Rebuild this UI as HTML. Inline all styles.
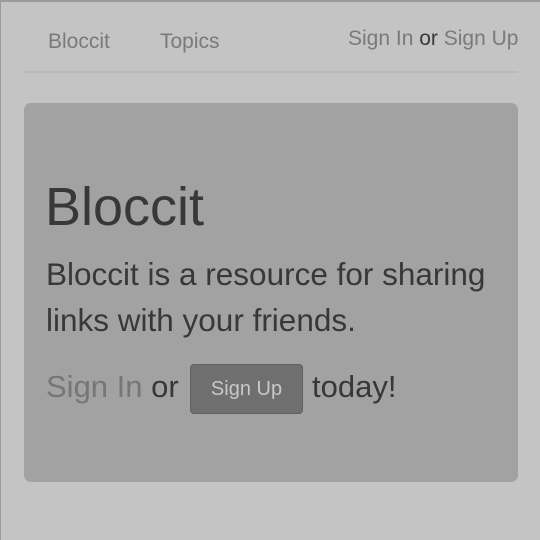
<!DOCTYPE html>
<html><head><style>
html,body{margin:0;padding:0}
body{width:540px;height:540px;background:#c4c4c4;font-family:"Liberation Sans",Arial,sans-serif;position:relative;overflow:hidden;border-top:2px solid #9a9a9a;box-sizing:border-box;border-left:1px solid #9a9a9a}
.t{position:absolute;white-space:nowrap}
.nav{color:#7a7a7a;font-size:21px}
.hr{position:absolute;left:23px;top:69px;width:494px;height:2px;background:#bababa}
.jb{position:absolute;left:23px;top:101px;width:494px;height:379px;background:#a2a2a2;border-radius:7px}
.btn{position:absolute;left:189px;top:362px;width:111px;height:48px;background:#6f6f6f;border:1px solid #626262;border-radius:4px;color:#c8c8c8;font-size:20px;text-align:center;line-height:48px}
</style></head><body>
<div class="t nav" style="left:47px;top:28px">Bloccit</div>
<div class="t nav" style="left:159px;top:28px">Topics</div>
<div class="t nav" style="left:347px;top:25px">Sign In <span style="color:#3a3a3a">or</span> Sign Up</div>
<div class="hr"></div>
<div class="jb"></div>
<div class="t" style="left:44px;top:174px;font-size:54px;color:#383838">Bloccit</div>
<div class="t" style="left:45px;top:249px;font-size:31.5px;color:#383838;line-height:46px">Bloccit is a resource for sharing<br>links with your friends.</div>
<div class="t" style="left:45px;top:367px;font-size:31px;color:#383838"><span style="color:#767676">Sign In</span> or</div>
<div class="btn">Sign Up</div>
<div class="t" style="left:311px;top:367px;font-size:31px;color:#383838">today!</div>
</body></html>
